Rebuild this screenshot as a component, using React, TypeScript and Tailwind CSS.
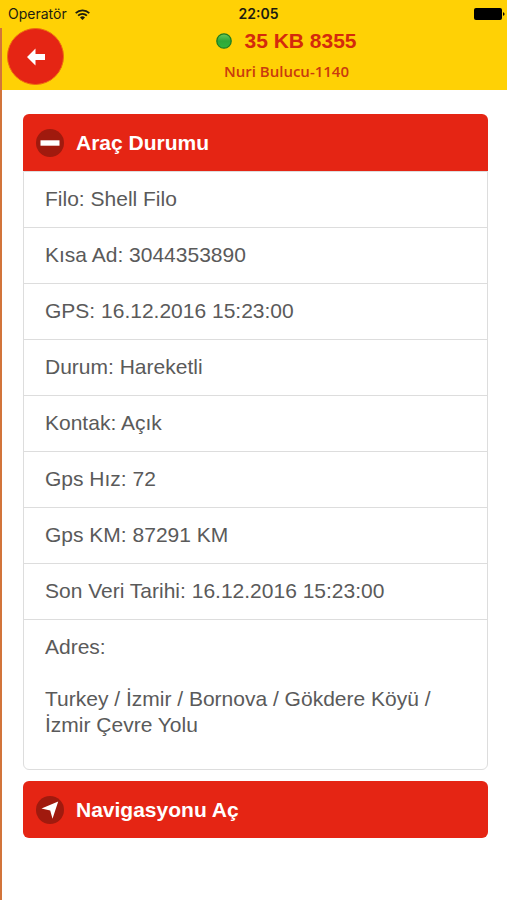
import type { ReactNode } from "react";
import { useState } from "react";

interface Field {
  label: string;
  value: string;
}

const vehicle = {
  plate: "35 KB 8355",
  driver: "Nuri Bulucu-1140",
  address: "Turkey / İzmir / Bornova / Gökdere Köyü / İzmir Çevre Yolu",
};

const fields: Field[] = [
  { label: "Filo", value: "Shell Filo" },
  { label: "Kısa Ad", value: "3044353890" },
  { label: "GPS", value: "16.12.2016 15:23:00" },
  { label: "Durum", value: "Hareketli" },
  { label: "Kontak", value: "Açık" },
  { label: "Gps Hız", value: "72" },
  { label: "Gps KM", value: "87291 KM" },
  { label: "Son Veri Tarihi", value: "16.12.2016 15:23:00" },
];

function StatusBar() {
  return (
    <div className="grid h-7 grid-cols-3 items-center bg-[#ffd105] pr-[2px] pl-2 font-['Inter',sans-serif] text-sm text-[#1c1c10]">
      <div className="flex items-center gap-2">
        <span>Operatör</span>
        <svg className="h-[11px] w-[15px]" viewBox="0 0 15 11" fill="none" stroke="currentColor" strokeWidth="1.7">
          <path d="M0.7 4.2a9.6 9.6 0 0 1 13.6 0" />
          <path d="M3.1 6.7a6.2 6.2 0 0 1 8.8 0" />
          <path d="M7.5 11 5 8.6a3.5 3.5 0 0 1 5 0z" fill="currentColor" stroke="none" />
        </svg>
      </div>
      <span className="pl-1 text-center font-semibold">22:05</span>
      <svg className="h-3 w-[31px] justify-self-end" viewBox="0 0 31 12" fill="#000">
        <rect x="0" y="0" width="28" height="12" rx="2" />
        <path d="M29 4.2c2 .3 2 3.3 0 3.6z" />
      </svg>
    </div>
  );
}

function Header() {
  return (
    <header className="flex h-[62px] items-start bg-[#ffd105] pl-[5px]">
      <button
        aria-label="Geri"
        className="flex h-[57px] w-[57px] shrink-0 items-center justify-center rounded-full border border-[#ee6a10] bg-[#e52514]"
      >
        <svg className="h-[18px] w-[18px]" viewBox="0 0 18 18" fill="#fff">
          <path d="M0 9 8.5 0.5V6H18v6H8.5v5.5z" />
        </svg>
      </button>
      <div className="flex flex-1 flex-col items-center pl-[2px]">
        <div className="flex h-[26px] items-center gap-3">
          <svg className="h-4 w-4" viewBox="0 0 16 16">
            <defs>
              <linearGradient id="led" x1="0" y1="0" x2="0" y2="1">
                <stop offset="0" stopColor="#6cc95c" />
                <stop offset="0.5" stopColor="#2fa838" />
                <stop offset="1" stopColor="#31b53e" />
              </linearGradient>
            </defs>
            <circle cx="8" cy="8" r="7.2" fill="url(#led)" stroke="#1f7d22" strokeWidth="1.3" />
          </svg>
          <h1 className="text-[21px] font-bold text-[#d42a0c]">{vehicle.plate}</h1>
        </div>
        <p className="font-['Open_Sans',sans-serif] text-[15px] leading-[34px] font-semibold text-[#c93a0e]">
          {vehicle.driver}
        </p>
      </div>
    </header>
  );
}

interface BarButtonProps {
  icon: ReactNode;
  children: ReactNode;
  className: string;
  expanded?: boolean;
  onClick?: () => void;
}

function BarButton({ icon, children, className, expanded, onClick }: BarButtonProps) {
  return (
    <button
      onClick={onClick}
      aria-expanded={expanded}
      className={`flex h-[57px] w-full items-center gap-3 bg-[#e52514] pl-[13px] text-left text-[21px] font-bold text-white ${className}`}
    >
      <span className="flex h-7 w-7 items-center justify-center rounded-full bg-[#a01a0e]">{icon}</span>
      {children}
    </button>
  );
}

export default function App() {
  const [open, setOpen] = useState(true);

  return (
    <div className="flex min-h-screen flex-col bg-white font-['Liberation_Sans',Arial,sans-serif]">
      <StatusBar />
      <div className="flex-1 border-l-2 border-[#d2743a]">
        <Header />
        <main className="flex flex-col gap-[11px] pt-6 pr-[19px] pb-6 pl-[21px]">
          <section>
            <BarButton
              className={open ? "rounded-t-md" : "rounded-md"}
              expanded={open}
              onClick={() => setOpen((o) => !o)}
              icon={
                <svg className="h-5 w-5" viewBox="0 0 20 20" fill="#fff">
                  <rect x="0.5" y="7.3" width="19" height="5.4" />
                  {!open && <rect x="7.3" y="0.5" width="5.4" height="19" />}
                </svg>
              }
            >
              Araç Durumu
            </BarButton>
            {open && (
              <ul className="rounded-b-md border border-[#dddddd] text-[21px] text-[#5a5a5a]">
                {fields.map((f) => (
                  <li key={f.label} className="flex h-14 items-center border-b border-[#dddddd] px-[21px] pb-[2px]">
                    {f.label}: {f.value}
                  </li>
                ))}
                {/* Address */}
                <li className="px-[21px] pt-[14px] pb-[31px] leading-[26px]">
                  <p>Adres:</p>
                  <p className="pt-[26px]">{vehicle.address}</p>
                </li>
              </ul>
            )}
          </section>
          <BarButton
            className="rounded-md"
            icon={
              <svg className="h-[18px] w-[18px]" viewBox="0 0 18 18" fill="#fff">
                <path d="M17.2 0.5 11.5 17.7 9.2 9.4 0.5 7.5z" />
              </svg>
            }
          >
            Navigasyonu Aç
          </BarButton>
        </main>
      </div>
    </div>
  );
}
